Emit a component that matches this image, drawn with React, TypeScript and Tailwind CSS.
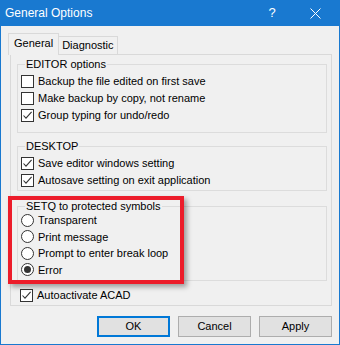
import React from 'react';

// Small Win10-style checkbox
function Check({ checked = false }: { checked?: boolean }) {
  return (
    <span className="w-[13px] h-[13px] border border-[#333333] bg-white flex items-center justify-center shrink-0">
      {checked && (
        <svg width="11" height="11" viewBox="0 0 11 11">
          <path d="M1.5 5.5 L4 8.2 L9.6 1.8" stroke="#333333" strokeWidth="1.1" fill="none" />
        </svg>
      )}
    </span>
  );
}

function Radio({ checked = false }: { checked?: boolean }) {
  return (
    <span className="w-[13px] h-[13px] rounded-full border border-[#333333] bg-white flex items-center justify-center shrink-0">
      {checked && <span className="w-[7px] h-[7px] rounded-full bg-[#333333]" />}
    </span>
  );
}

function Row({ children, label, h = 'h-[17px]' }: { children: React.ReactNode; label: string; h?: string }) {
  return (
    <div className={`flex items-center gap-[4px] pl-[3px] ${h}`}>
      {children}
      <span className="whitespace-nowrap">{label}</span>
    </div>
  );
}

function Group({ title, className = '', children }: { title: string; className?: string; children: React.ReactNode }) {
  return (
    <fieldset className={`border border-[#dcdcdc] w-[310px] ${className}`}>
      <legend className="ml-[7px] px-[1px] leading-[13px]">{title}</legend>
      {children}
    </fieldset>
  );
}

export default function App() {
  const editor = [
    { label: 'Backup the file edited on first save', checked: false },
    { label: 'Make backup by copy, not rename', checked: false },
    { label: 'Group typing for undo/redo', checked: true },
  ];
  const setq = ['Transparent', 'Print message', 'Prompt to enter break loop', 'Error'];

  return (
    <div className="relative w-[340px] h-[345px] bg-[#f0f0f0] border-x border-b border-[#1979d0] flex flex-col font-['Liberation_Sans',Arial,sans-serif] text-[11px] text-black overflow-hidden">
      {/* title bar */}
      <div className="h-[26px] -mx-px bg-[#1979d0] text-white flex items-center shrink-0">
        <span className="ml-[5px] text-[12px] flex-1">General Options</span>
        <span className="text-[13px] w-[20px] text-center mr-[28px]">?</span>
        <svg width="11" height="11" viewBox="0 0 11 11" className="mr-[19px]">
          <path d="M0.5 0.5 L10.5 10.5 M10.5 0.5 L0.5 10.5" stroke="white" strokeWidth="1" />
        </svg>
      </div>

      {/* tabs */}
      <div className="flex items-end h-[21px] mt-[7px] ml-[7px]">
        <div className="relative z-10 h-[22px] -mb-px bg-[#f0f0f0] border-x border-t border-[#d9d9d9] px-[5px] pt-[3px] leading-[13px]">
          General
        </div>
        <div className="h-[18px] border-r border-t border-[#d9d9d9] px-[3px] pt-[2px] leading-[13px]">
          Diagnostic
        </div>
      </div>

      {/* panel */}
      <div className="ml-[9px] w-[322px] h-[252px] border border-[#d9d9d9] pt-[3px] pl-[6px] flex flex-col">
        <Group title="EDITOR options" className="pb-[8px]">
          <div className="mt-[2px]">
            {editor.map((e) => (
              <Row key={e.label} label={e.label}>
                <Check checked={e.checked} />
              </Row>
            ))}
          </div>
        </Group>

        <Group title="DESKTOP" className="mt-[7px] pb-[1px]">
          <div className="mt-[2px]">
            <Row label="Save editor windows setting">
              <Check checked />
            </Row>
            <Row label="Autosave setting on exit application">
              <Check checked />
            </Row>
          </div>
        </Group>

        <Group title="SETQ to protected symbols" className="mt-[9px] pb-[2px]">
          <div className="mt-[-1px]">
            {setq.map((s) => (
              <Row key={s} label={s} h="h-[16.5px]">
                <Radio checked={s === 'Error'} />
              </Row>
            ))}
          </div>
        </Group>

        <div className="mt-[6px]">
          <Row label="Autoactivate ACAD">
            <Check checked />
          </Row>
        </div>
      </div>

      {/* buttons */}
      <div className="flex justify-end gap-[8px] mt-[10px] mr-[7px]">
        <button className="w-[73px] h-[21px] bg-[#e1e1e1] border-2 border-[#0078d7] leading-none">OK</button>
        <button className="w-[73px] h-[21px] bg-[#e1e1e1] border border-[#adadad] leading-none">Cancel</button>
        <button className="w-[73px] h-[21px] bg-[#e1e1e1] border border-[#adadad] leading-none">Apply</button>
      </div>

      {/* red highlight annotation */}
      <div className="absolute left-[7px] top-[196px] w-[176px] h-[88px] border-[4px] border-[#ec1c2a] shadow-[3px_3px_5px_rgba(0,0,0,0.35)] pointer-events-none" />
    </div>
  );
}
